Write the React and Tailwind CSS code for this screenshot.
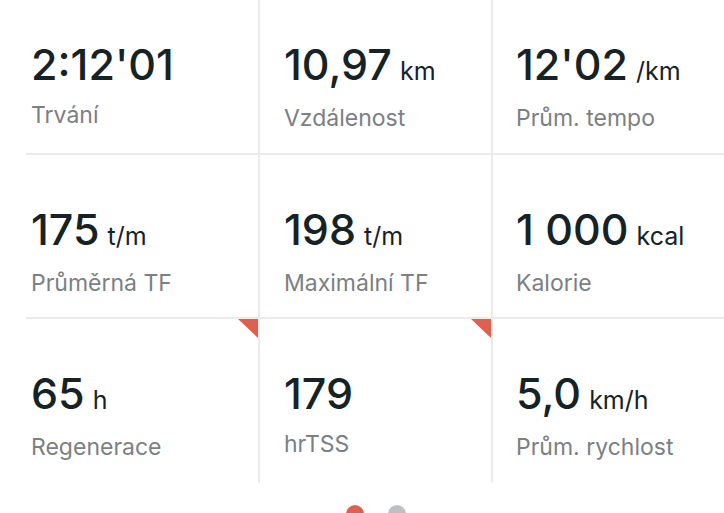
import React from "react";

const rows = [
  [
    { value: "2:12'01", label: "Trvání" },
    { value: "10,97", unit: "km", label: "Vzdálenost" },
    { value: "12'02", unit: "/km", label: "Prům. tempo" },
  ],
  [
    { value: "175", unit: "t/m", label: "Průměrná TF" },
    { value: "198", unit: "t/m", label: "Maximální TF" },
    { value: "1 000", unit: "kcal", label: "Kalorie" },
  ],
  [
    { value: "65", unit: "h", label: "Regenerace", flag: true },
    { value: "179", label: "hrTSS", flag: true },
    { value: "5,0", unit: "km/h", label: "Prům. rychlost" },
  ],
];

const padLeft = ["pl-[5px]", "pl-[24px]", "pl-[23px]"];

const Stat = ({ stat, col, first, last }) => (
  <div
    className={`relative flex flex-col ${padLeft[col]} ${
      first ? "h-[155px] pt-[40px]" : "h-[164px] pt-[50px]"
    } ${last ? "" : "border-b-2 border-[#ebebeb]"} ${
      col < 2 ? "border-r-2 border-r-[#ebebeb]" : ""
    }`}
  >
    {stat.flag && (
      <div className="absolute right-0 top-0 h-[19px] w-[20px] bg-[#e0604f] [clip-path:polygon(0_0,100%_0,100%_100%)]" />
    )}
    <div className="flex items-baseline whitespace-nowrap text-[#162326]">
      <span className="text-[43px] font-medium leading-[48px]">{stat.value}</span>
      {stat.unit && <span className="ml-[8px] text-[25px]">{stat.unit}</span>}
    </div>
    <div className="mt-[13px] text-[23px] leading-[28px] text-[#7b8083]">{stat.label}</div>
  </div>
);

export default function App() {
  return (
    <div className="h-[513px] w-[724px] overflow-hidden bg-white font-['Inter',sans-serif]">
      <div className="grid grid-cols-[234px_233px_233px] pl-[26px]">
        {rows.map((row, r) =>
          row.map((stat, c) => (
            <Stat key={`${r}-${c}`} stat={stat} col={c} first={r === 0} last={r === 2} />
          ))
        )}
      </div>
      <div className="mt-[22px] flex justify-center gap-[24px] pl-[28px]">
        <div className="h-[18px] w-[18px] rounded-full bg-[#e0604f]" />
        <div className="h-[18px] w-[18px] rounded-full bg-[#bdbfc2]" />
      </div>
    </div>
  );
}
